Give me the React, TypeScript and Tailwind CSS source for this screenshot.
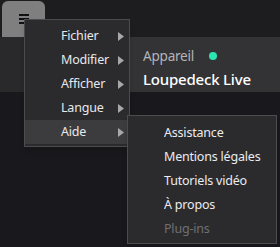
const mainItems = ["Fichier", "Modifier", "Afficher", "Langue", "Aide"];
const helpItems = ["Assistance", "Mentions légales", "Tutoriels vidéo", "À propos"];

function Arrow() {
    return (
        <svg width="6" height="9" viewBox="0 0 6 9" className="absolute left-[93px] top-[8px]">
            <path d="M0 0 L6 4.5 L0 9 Z" fill="#a8a8aa" />
        </svg>
    );
}

export default function App() {
    return (
        <div
            className="relative w-[280px] h-[247px] overflow-hidden bg-[#19181c] text-[12.5px] tracking-[-0.2px]"
            style={{ fontFamily: '"Noto Sans", "Open Sans", sans-serif' }}
        >
            <header className="h-[37px] bg-[#1d1d1f] flex items-start pl-[2px] pt-[1px]">
                <button className="w-[43px] h-[36px] rounded-t-md bg-[#7f7f7f] flex flex-col items-center justify-center gap-[2px]">
                    <span className="block w-[10px] h-[2px] bg-[#111]" />
                    <span className="block w-[10px] h-[2px] bg-[#111]" />
                    <span className="block w-[10px] h-[2px] bg-[#111]" />
                </button>
            </header>

            <section className="h-[55px] flex">
                <div className="w-[130px] bg-[#29292c]" />
                <div className="flex-1 bg-[#333336] pl-[13px] pt-[9px]">
                    <div className="flex items-center gap-[15px] text-[13.5px] text-[#b4b4b8] leading-[20px]">
                        Appareil
                        <span className="w-[8px] h-[8px] rounded-full bg-[#2be5b2]" />
                    </div>
                    <div className="text-[15px] font-medium text-white leading-[24px] mt-[1px]">Loupedeck Live</div>
                </div>
            </section>

            <div className="absolute left-[24px] top-[19px] w-[106px] border border-[#4c4c4f] bg-[#2b2b2e] pt-[4px] pb-[2px] shadow-md">
                <ul className="flex flex-col">
                    {mainItems.map((item) => (
                        <li
                            key={item}
                            className={`relative h-[24px] leading-[24px] pl-[36px] text-[#e8e8ea] ${item === "Aide" ? "bg-[#3c3c3f]" : ""}`}
                        >
                            {item}
                            <Arrow />
                        </li>
                    ))}
                </ul>
            </div>

            <div className="absolute left-[127px] top-[115px] w-[150px] h-[129px] border border-[#4c4c4f] bg-[#2b2b2e] pt-[5px] shadow-md">
                <ul className="flex flex-col">
                    {helpItems.map((item) => (
                        <li key={item} className="h-[24px] leading-[24px] pl-[36px] text-[#ececee]">
                            {item}
                        </li>
                    ))}
                    <li className="h-[24px] leading-[24px] pl-[36px] text-[#707073]">Plug-ins</li>
                </ul>
            </div>
        </div>
    );
}
